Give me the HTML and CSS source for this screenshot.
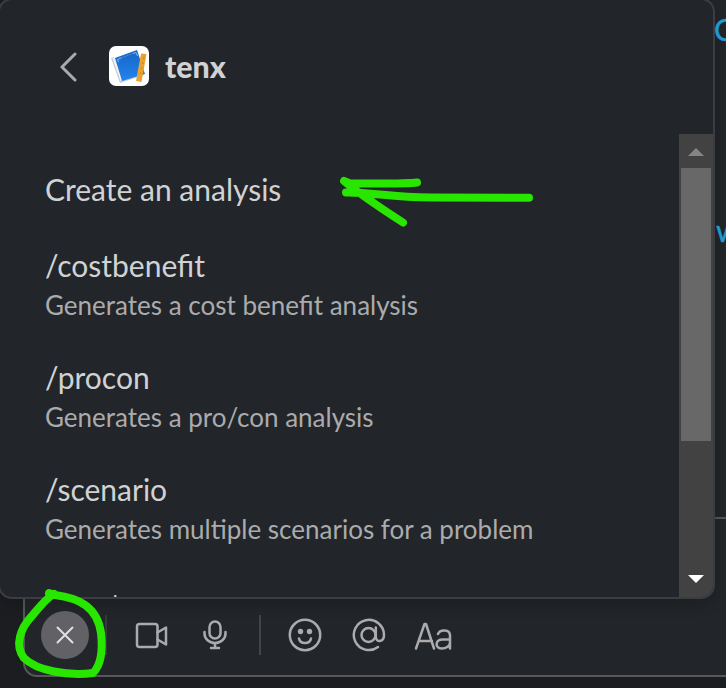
FILE: index.html
```
<!DOCTYPE html>
<html lang="en">
<head>
<meta charset="utf-8">
<title>tenx</title>
<link rel="stylesheet" href="styles.css">
</head>
<body>
<div class="app">
  <div class="message-box"></div>

  <div class="composer">
    <button class="close" aria-label="Close"><svg width="18" height="18" viewBox="0 0 18 18"><path d="M1.500 1.500l15 15M16.500 1.500l-15 15"/></svg></button>
    <i class="divider first"></i>
    <svg class="icon video" width="34" height="28" viewBox="0 0 34 28"><rect x="2" y="2" width="20.500" height="23" rx="2.500"/><path d="M22.500 10.500L31 5.500v17l-8.500-5"/></svg>
    <svg class="icon mic" width="26" height="32" viewBox="0 0 26 32"><rect x="7.500" y="2.500" width="11" height="17" rx="5.500"/><path d="M2.500 13v1.500a10.500 9.500 0 0 0 21 0V13M13 24v5M9 29h8"/></svg>
    <i class="divider"></i>
    <svg class="icon smile" width="34" height="34" viewBox="0 0 34 34"><circle cx="17" cy="17" r="15.200"/><circle class="eye" cx="12.500" cy="13.500" r="2.700"/><circle class="eye" cx="21.500" cy="13.500" r="2.700"/><path d="M11 20.500c1 6 11 6 12 0"/></svg>
    <svg class="icon at" width="34" height="34" viewBox="0 0 34 34"><circle cx="16.500" cy="17" r="7"/><path d="M23.800 9.500V19c0 5.600 8.200 5.600 8.200-2A15.100 15.100 0 1 0 26 29"/></svg>
    <svg class="icon aa" width="38" height="30" viewBox="0 0 38 30"><path d="M2 27.500L10.500 3h1.500l8 24.500M5 20h13M24 13c2-5 12-5 12 1.500v13M36 18.500h-7c-8.500 0-8 9-1.500 9 5 0 8.500-3 8.500-6"/></svg>
  </div>

  <section class="popup">
    <header>
      <svg class="back" width="18" height="30" viewBox="0 0 18 30"><path d="M15 2L2 15L15 28"/></svg>
      <svg class="logo" width="40" height="40" viewBox="0 0 40 40">
        <defs><linearGradient id="cover" x2="0" y2="1"><stop stop-color="#1764c5"/><stop offset="1" stop-color="#2384ee"/></linearGradient></defs>
        <rect width="40" height="40" rx="7" fill="#fff"/>
        <path d="M2 12L11 37L35 29L32 25L12 33L5 11z" fill="#c9cbd0"/>
        <path d="M3.500 12L11.500 35L13 34L6 12z" fill="#f2f2f4"/>
        <path d="M6 12L28 4L36 28L13 35z" fill="url(#cover)"/>
        <path d="M9.500 16L8.500 13.500L12 12M24 7.500L27 6.500L28.500 10" fill="none" stroke="#a9cff4" stroke-width=".8"/>
        <path d="M12 12l12-4.500" stroke="#71aeea" stroke-width=".6" stroke-dasharray="2 1"/>
        <path d="M32 7.500L37.500 8L32.500 36L27 35z" fill="#e8a331"/>
        <path d="M34 12l1.500.2M33 17l1.500.2M32 22l1.500.2M31 27l1.500.2" stroke="#ad7216" stroke-width=".8"/>
      </svg>
      <h1>tenx</h1>
    </header>
    <div class="body">
      <div class="list">
        <div class="item"><p class="name">Create an analysis</p></div>
        <div class="item"><p class="name">/costbenefit</p><p class="desc">Generates a cost benefit analysis</p></div>
        <div class="item"><p class="name">/procon</p><p class="desc">Generates a pro/con analysis</p></div>
        <div class="item"><p class="name">/scenario</p><p class="desc">Generates multiple scenarios for a problem</p></div>
        <div class="item more"><p class="name">smart</p></div>
      </div>
      <div class="scrollbar"><i class="up"></i><i class="thumb"></i><i class="down"></i></div>
    </div>
  </section>

  <span class="peek peek-top">C</span>
  <span class="peek peek-mid">w</span>

  <svg class="marks" width="726" height="688" viewBox="0 0 726 688">
    <path d="M417 182.500C406 184 382 183.500 350 183.500L344 181C356 191 379 207 403 222.500M346 192.500C370 192 392 197.500 430 197.500L529 197.700"/>
    <path d="M49 593L55 595C78 598 97 606 101 633C103 651 101 665 93 673C68 676 37 671 24 658C14 645 21 628 31 617C39 608 46 598 54 594"/>
  </svg>
</div>
</body>
</html>
```
FILE: styles.css
```
* { box-sizing: border-box; }
body { margin: 0; background: #1b1d21; font-family: Lato, sans-serif; }
p, h1 { margin: 0; }
.app { position: relative; width: 726px; height: 688px; overflow: hidden; background: #1b1d21; display: flex; align-items: flex-end; }
.message-box { position: absolute; left: 600px; top: -10px; width: 200px; height: 529px; background: #222529; border-bottom: 2px solid #565856; }
.peek { position: absolute; color: #1d9bd1; font-size: 30px; line-height: 36px; -webkit-text-stroke: 0.4px #1d9bd1; }
.peek-top { left: 714px; top: 11px; }
.peek-mid { left: 716px; top: 212px; }
.composer { position: relative; flex: 0 0 740px; height: 160px; margin: 0 0 11px 23px; padding: 76px 0 0 16px; display: flex; align-items: center; background: #222529; border: 2px solid #565856; border-radius: 14px; }
.close { width: 48px; height: 48px; padding: 0; border: 0; border-radius: 50%; background: #616166; display: grid; place-items: center; flex: none; }
.close path { fill: none; stroke: #e0e0e0; stroke-width: 2; stroke-linecap: round; }
.divider { width: 2px; height: 40px; background: #424448; margin-left: 30px; flex: none; }
.divider.first { margin-left: 16px; background: #36393d; }
.popup { position: absolute; left: -2px; top: -2px; width: 717px; height: 601px; border: 2px solid #3b3d40; border-radius: 14px; background: #222529; overflow: hidden; display: flex; flex-direction: column; box-shadow: 0 4px 16px rgba(0,0,0,.2); }
header { height: 134px; flex: none; padding-left: 60px; display: flex; align-items: center; }
.icon, .back { fill: none; stroke: #ababad; stroke-width: 2.5; stroke-linecap: round; stroke-linejoin: round; flex: none; }
.back { margin-top: -1px; stroke-width: 3; }
.eye { fill: #ababad; stroke: none; }
.video { margin-left: 28px; margin-top: 1px; }
.mic { margin-left: 33px; }
.divider:not(.first) { margin-left: 31px; }
.smile { margin-left: 27px; }
.at { margin-left: 30px; }
.aa { margin-left: 28px; margin-top: 1px; }
.logo { margin-left: 31px; margin-top: -2px; }
h1 { margin: -2px 0 0 16px; font-size: 30.3px; font-weight: 900; line-height: 36px; color: #d1d2d3; }
.body { flex: 1; display: flex; min-height: 0; }
.list { flex: 1; padding: 36.5px 0 0 45px; overflow: hidden; }
.item { margin-bottom: 34.5px; }
.item:first-child { margin-bottom: 40px; }
.name { font-size: 30px; line-height: 36px; color: #d1d2d3; }
.desc { margin-top: 3.5px; font-size: 26px; line-height: 38px; color: #ababad; white-space: nowrap; }
.more { padding: 3px 0 0 2px; }
.scrollbar { width: 34px; background: #424242; display: flex; flex-direction: column; align-items: center; }
.up { margin-top: 14px; border: 8px solid transparent; border-top: 0; border-bottom-color: #858585; }
.thumb { margin-top: 12px; width: 30px; height: 273px; background: #686868; }
.down { margin-top: auto; margin-bottom: 14px; border: 8px solid transparent; border-bottom: 0; border-top-color: #fff; }
.marks { position: absolute; left: 0; top: 0; pointer-events: none; }
.marks path { fill: none; stroke: #28e600; stroke-width: 8; stroke-linecap: round; stroke-linejoin: round; }
```
